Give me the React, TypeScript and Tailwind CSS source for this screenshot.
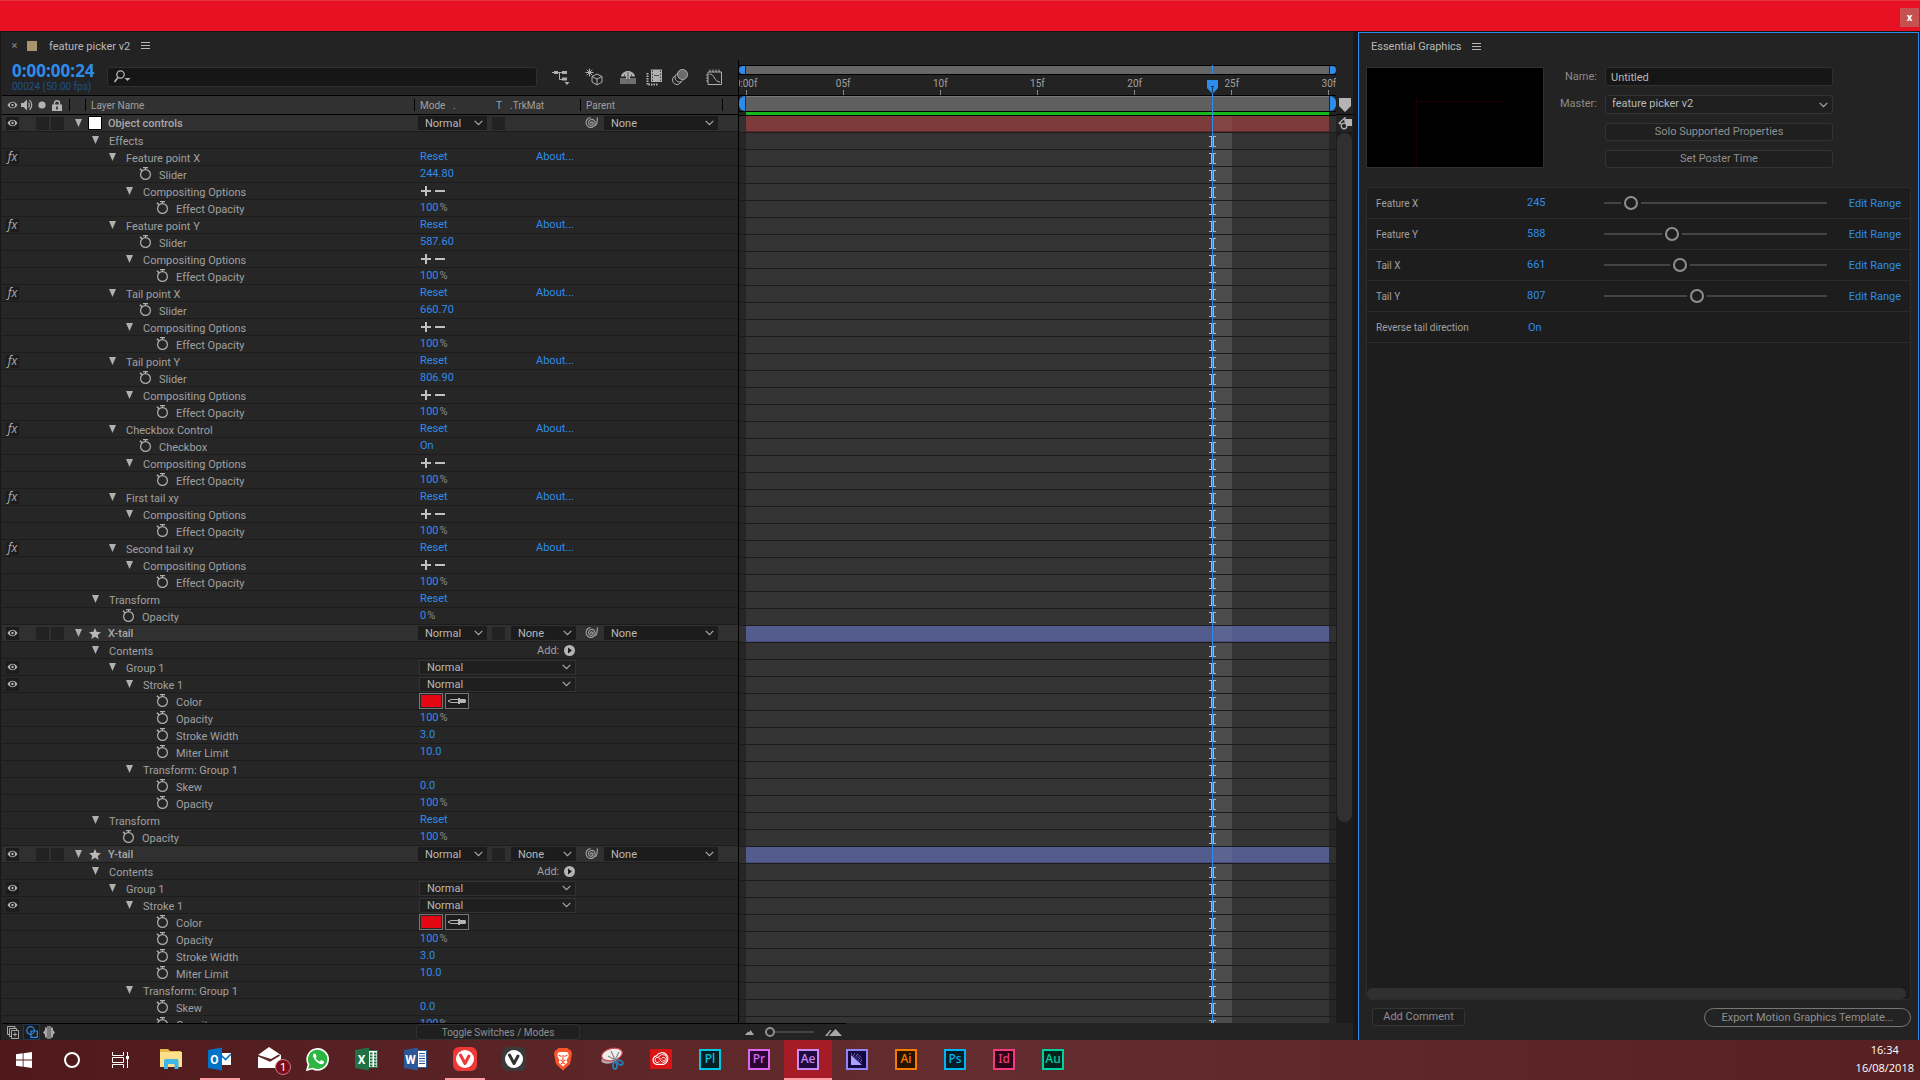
import React from "react";

type Row = {
  kind: "layer" | "group" | "prop";
  name: string;
  depth: number;
  value?: string;
  unit?: string;
  about?: boolean;
  fx?: boolean;
  eye?: boolean;
  icon?: "solid" | "star";
  trk?: boolean;
  extra?: "plusminus" | "add" | "blend" | "color";
};

const effect = (name: string, control?: [string, string]): Row[] => [
  { kind: "group", name, depth: 2, value: "Reset", about: true, fx: true },
  ...(control ? [{ kind: "prop", name: control[0], depth: 3, value: control[1] } as Row] : []),
  { kind: "group", name: "Compositing Options", depth: 3, extra: "plusminus" },
  { kind: "prop", name: "Effect Opacity", depth: 4, value: "100", unit: "%" },
];

const shape = (name: string): Row[] => [
  { kind: "layer", name, depth: 0, icon: "star", trk: true },
  { kind: "group", name: "Contents", depth: 1, extra: "add" },
  { kind: "group", name: "Group 1", depth: 2, eye: true, extra: "blend" },
  { kind: "group", name: "Stroke 1", depth: 3, eye: true, extra: "blend" },
  { kind: "prop", name: "Color", depth: 4, extra: "color" },
  { kind: "prop", name: "Opacity", depth: 4, value: "100", unit: "%" },
  { kind: "prop", name: "Stroke Width", depth: 4, value: "3.0" },
  { kind: "prop", name: "Miter Limit", depth: 4, value: "10.0" },
  { kind: "group", name: "Transform: Group 1", depth: 3 },
  { kind: "prop", name: "Skew", depth: 4, value: "0.0" },
  { kind: "prop", name: "Opacity", depth: 4, value: "100", unit: "%" },
  { kind: "group", name: "Transform", depth: 1, value: "Reset" },
  { kind: "prop", name: "Opacity", depth: 2, value: "100", unit: "%" },
];

const rows: Row[] = [
  { kind: "layer", name: "Object controls", depth: 0, icon: "solid" },
  { kind: "group", name: "Effects", depth: 1 },
  ...effect("Feature point X", ["Slider", "244.80"]),
  ...effect("Feature point Y", ["Slider", "587.60"]),
  ...effect("Tail point X", ["Slider", "660.70"]),
  ...effect("Tail point Y", ["Slider", "806.90"]),
  ...effect("Checkbox Control", ["Checkbox", "On"]),
  ...effect("First tail xy"),
  ...effect("Second tail xy"),
  { kind: "group", name: "Transform", depth: 1, value: "Reset" },
  { kind: "prop", name: "Opacity", depth: 2, value: "0", unit: "%" },
  ...shape("X-tail"),
  ...shape("Y-tail").slice(0, 11),
];

/* ---------- small icons ---------- */

const Eye = () => (
  <svg width="11" height="8" viewBox="0 0 11 8" aria-hidden="true">
    <path d="M0.5 4C2 1.6 3.600 .7 5.500 .7S9 1.600 10.500 4C9 6.400 7.400 7.300 5.500 7.300S2 6.400 .5 4Z" fill="#b4b4b4" />
    <circle cx="5.500" cy="4" r="2.500" fill="#1c1c1c" />
    <circle cx="5.500" cy="4" r="1.200" fill="#b4b4b4" />
  </svg>
);

const Twirl = () => (
  <svg width="7" height="8" viewBox="0 0 7 8" aria-hidden="true">
    <path d="M0 0H7L3.500 8Z" fill="#b0b0b0" />
  </svg>
);

const Stopwatch = () => (
  <svg width="13" height="14" viewBox="0 0 13 14" fill="none" stroke="#b0b0b0" aria-hidden="true">
    <circle cx="6.500" cy="7.500" r="4.900" strokeWidth="1.200" />
    <path d="M4 .6H9M6.500 .6V3" strokeWidth="1.200" />
    <path d="M1 1.700L3 3.700" strokeWidth="1.600" />
  </svg>
);

const Whip = () => (
  <svg width="13" height="12" viewBox="0 0 13 12" fill="none" stroke="#a0a0a0" strokeWidth="1.200" aria-hidden="true">
    <path d="M6.500 6.500C5.500 6.500 5.300 5.300 6.300 4.900C7.500 4.500 8.500 5.800 8 7C7.300 8.700 4.800 8.700 3.900 7C3 5.200 4 3 6 2.500C8.500 2 10.500 4 10.200 6.500C9.900 9.500 6.500 11.300 3.800 10C1 8.700 .3 5 1.900 2.700C2.800 1.400 4 .8 5.500 .6" />
    <path d="M12.300 .5C12.500 3 12.300 6.500 10.500 9" />
  </svg>
);

const Chevron = () => (
  <svg width="9" height="6" viewBox="0 0 9 6" fill="none" stroke="#a8a8a8" strokeWidth="1.200" aria-hidden="true">
    <path d="M.7 .8L4.500 4.600L8.300 .8" />
  </svg>
);

const Star = () => (
  <svg width="12" height="11" viewBox="0 0 12 11" aria-hidden="true">
    <path d="M6 0L7.600 3.800L12 4.200L8.700 6.900L9.700 11L6 8.700L2.300 11L3.300 6.900L0 4.200L4.400 3.800Z" fill="#b8b8b8" />
  </svg>
);

const Burger = () => (
  <svg width="9" height="8" viewBox="0 0 9 8" stroke="#b8b8b8" strokeWidth="1" aria-hidden="true">
    <path d="M0 .5H9M0 3.500H9M0 6.500H9" />
  </svg>
);

function Select({ label, value, box }: { label: string; value: string; box: string }) {
  return (
    <span className={"grid items-center " + box}>
      <select
        aria-label={label}
        className="col-start-1 row-start-1 h-full w-full appearance-none bg-transparent pl-[7px] text-[11px] leading-[13px] text-[#b8b8b8] outline-none"
      >
        <option>{value}</option>
      </select>
      <span className="pointer-events-none col-start-1 row-start-1 mr-1 justify-self-end">
        <Chevron />
      </span>
    </span>
  );
}

/* ---------- layer outline ---------- */

const indent = ["w-[7px]", "w-6", "w-[41px]", "w-[58px]", "w-[75px]"];

function OutlineRow({ row }: { row: Row }) {
  const layer = row.kind === "layer";
  return (
    <div
      className={
        "flex h-[17px] shrink-0 items-center border-b border-[#1c1c1c] text-[11px] leading-4 " +
        (layer ? "bg-[#303030]" : "bg-[#262626]")
      }
    >
      <div className="flex w-[66px] shrink-0 items-center pl-1">
        <span
          className={
            "flex h-[13px] w-[13px] items-center justify-center " +
            (layer || row.eye || row.fx ? "bg-[#1c1c1c]" : "")
          }
        >
          {(layer || row.eye) && <Eye />}
          {row.fx && (
            <i className="pb-[2px] font-['Open_Sans',sans-serif] text-[12px] leading-[11px] text-[#b0b0b0]">fx</i>
          )}
        </span>
        {layer && <span className="ml-[17px] h-[13px] w-[13px] bg-[#222]" />}
        {layer && <span className="ml-[2px] h-[13px] w-[13px] bg-[#222]" />}
      </div>
      <div className="flex min-w-0 flex-1 items-center">
        <span className={"shrink-0 " + indent[row.depth]} />
        {layer && (
          <>
            <Twirl />
            <span className="ml-[6px] flex w-[14px] justify-center">
              {row.icon === "star" ? <Star /> : <span className="h-[14px] w-[14px] border border-black bg-white" />}
            </span>
            <span className="ml-[6px] pt-px font-medium text-[#a8a8a8]">{row.name}</span>
          </>
        )}
        {row.kind === "group" && (
          <>
            <span className="mr-[10px]">
              <Twirl />
            </span>
            <span className="pt-[3px] text-[#a0a0a0]">{row.name}</span>
          </>
        )}
        {row.kind === "prop" && (
          <>
            <span className="ml-[13px] mr-[7px]">
              <Stopwatch />
            </span>
            <span className="pt-[3px] text-[#a0a0a0]">{row.name}</span>
          </>
        )}
      </div>
      <div className="flex w-[320px] shrink-0 items-center">
        {layer && (
          <>
            <Select label={row.name + " mode"} value="Normal" box="h-[14px] w-[69px] bg-[#1c1c1c]" />
            <span className="ml-[5px] h-[13px] w-[13px] bg-[#222]" />
            <span className="ml-[6px] w-[65px]">
              {row.trk && <Select label={row.name + " track matte"} value="None" box="h-[14px] w-[65px] bg-[#1c1c1c]" />}
            </span>
            <span className="ml-[9px] mr-[6px]">
              <Whip />
            </span>
            <Select label={row.name + " parent"} value="None" box="h-[14px] w-[114px] bg-[#1c1c1c]" />
          </>
        )}
        {row.value && (
          <span className="w-[116px] pl-[2px]">
            <button className="text-[#2d8ceb]">{row.value}</button>
            {row.unit && <span className="ml-px text-[#8a8a8a]">{row.unit}</span>}
          </span>
        )}
        {row.about && <button className="ml-[2px] text-[#2d8ceb]">About...</button>}
        {row.extra === "plusminus" && (
          <span className="ml-[3px] flex gap-1">
            <button aria-label="Add compositing mask">
              <svg width="10" height="10" stroke="#c0c0c0" strokeWidth="2" aria-hidden="true">
                <path d="M0 5H10M5 0V10" />
              </svg>
            </button>
            <button aria-label="Remove compositing mask">
              <svg width="10" height="10" stroke="#c0c0c0" strokeWidth="2" aria-hidden="true">
                <path d="M0 5H10" />
              </svg>
            </button>
          </span>
        )}
        {row.extra === "add" && (
          <button className="ml-[119px] flex items-center gap-[5px] text-[#a0a0a0]">
            <span className="pt-[2px]">Add:</span>
            <svg width="11" height="11" viewBox="0 0 11 11" aria-hidden="true">
              <circle cx="5.500" cy="5.500" r="5.500" fill="#b4b4b4" />
              <path d="M4 2.500L8 5.500L4 8.500Z" fill="#1c1c1c" />
            </svg>
          </button>
        )}
        {row.extra === "blend" && (
          <Select
            label={row.name + " blend mode"}
            value="Normal"
            box="ml-px h-[15px] w-[157px] border border-[#323232] bg-[#1f1f1f]"
          />
        )}
        {row.extra === "color" && (
          <span className="ml-px flex gap-[2px]">
            <button aria-label="Stroke color" className="h-4 w-6 border border-[#777] bg-[#e30613] outline outline-1 -outline-offset-2 outline-[#262626]" />
            <button aria-label="Pick color" className="flex h-4 w-6 items-center justify-center border border-[#777] bg-[#1c1c1c]">
              <svg width="20" height="8" viewBox="0 0 20 8" aria-hidden="true">
                <path d="M12 2.500H4L1 4L4 5.500H12" fill="none" stroke="#b4b4b4" strokeWidth="1" />
                <path d="M11 1H13V2H18L19 3V5L18 6H13V7H11Z" fill="#b4b4b4" />
              </svg>
            </button>
          </span>
        )}
      </div>
    </div>
  );
}

/* ---------- timeline ---------- */

const IBeam = () => (
  <svg width="7" height="11" viewBox="0 0 7 11" className="absolute -left-[3px] top-[3px]" stroke="#b4b4b4" aria-hidden="true">
    <path d="M0 .5H7M0 10.500H7" />
    <path d="M3.500 0V11" strokeWidth="3" />
  </svg>
);

function TrackRow({ row }: { row: Row }) {
  const layer = row.kind === "layer";
  const red = row.icon === "solid";
  return (
    <div className={"flex h-[17px] shrink-0 border-b border-[#1c1c1c] px-[7px] " + (layer ? "bg-[#303030]" : "bg-[#262626]")}>
      <div
        className={
          "flex flex-1 " +
          (layer
            ? red
              ? "border-b border-[#5e2a2a] bg-[#7c3a3a]"
              : "border-b border-[#464d7c] bg-[#535c8c]"
            : "bg-[#343434]")
        }
      >
        <span className="w-[80%]" />
        <span className={"relative w-[3.33%] " + (layer ? "bg-white/5" : "bg-white/12")}>{!layer && <IBeam />}</span>
      </div>
    </div>
  );
}

function Timeline() {
  const labels = ["0:00f", "05f", "10f", "15f", "20f", "25f", "30f"];
  return (
    <div className="relative flex min-w-0 flex-1 flex-col overflow-hidden border-l border-black">
      <div className="mt-[5px] flex h-[10px] items-stretch border-y border-black bg-[#232323]">
        <span className="w-[6px] rounded-l-full bg-[#2d8ceb]" />
        <span className="mx-px flex-1 bg-[#666]" />
        <span className="w-[6px] rounded-r-full bg-[#2d8ceb]" />
      </div>
      <div className="flex h-5 justify-between px-[7px] pt-1 text-[10px] leading-[10px] text-[#a0a0a0]">
        {labels.map((l) => (
          <span key={l} className="flex w-0 flex-col items-center justify-between whitespace-nowrap">
            {l}
            <span className="h-[5px] w-px bg-[#8a8a8a]" />
          </span>
        ))}
      </div>
      <div className="flex h-[17px] items-stretch border-y border-black">
        <span className="w-[6px] rounded-l-md bg-[#2d8ceb]" />
        <span className="mx-px flex-1 border-t border-[#777] bg-[#5f5f5f]" />
        <span className="w-[6px] rounded-r-md bg-[#2d8ceb]" />
      </div>
      <div className="flex h-[3px] px-[7px]">
        <span className="flex-1 bg-[#16b81e]" />
      </div>
      <div className="flex min-h-0 flex-1 flex-col overflow-hidden border-t border-black">
        {rows.map((r, i) => (
          <TrackRow key={i} row={r} />
        ))}
      </div>
      <div className="pointer-events-none absolute inset-x-[7px] bottom-0 top-[5px]">
        <div className="relative h-full">
          <span className="absolute left-[80%] top-0 h-[9px] w-px bg-[#2d8ceb]" />
          <span className="absolute bottom-0 left-[80%] top-7 w-px bg-[#2d8ceb]" />
          <span className="absolute left-[80%] top-[15px] -ml-[5px]">
            <svg width="11" height="14" viewBox="0 0 11 14" aria-hidden="true">
              <path d="M0 0H11V8L6.500 13H4.500L0 8Z" fill="#2d8ceb" />
              <path d="M4 6.500H7M5.500 6.500V13" stroke="#12385f" />
            </svg>
          </span>
        </div>
      </div>
    </div>
  );
}

const ToolIcon = ({ label, children }: { label: string; children: React.ReactNode }) => (
  <button aria-label={label} className="flex h-5 w-5 items-center justify-center">
    <svg width="18" height="18" viewBox="0 0 18 18" fill="none" stroke="#b0b0b0" aria-hidden="true">
      {children}
    </svg>
  </button>
);

function Tools() {
  return (
    <div className="flex items-center pb-[2px] pl-[14px]">
      <ToolIcon label="Mini flowchart">
        <path d="M0 4.500H10M7.500 4.500V11.500H10" />
        <path d="M2 3H6V6H2ZM10 3H15V6H10ZM10 9.500H15V12.500H10ZM12.500 14H17.500L15 17Z" fill="#b0b0b0" stroke="none" />
      </ToolIcon>
      <span className="w-[13px]" />
      <ToolIcon label="Draft 3D">
        <path d="M12 6L17 8.500V14L12 17L7 14V8.500ZM7 8.500L12 11L17 8.500M12 11V17" />
        <path d="M4.500 .5V8.500M.5 4.500H8.500M1.700 1.700L7.300 7.300M7.300 1.700L1.700 7.300" />
      </ToolIcon>
      <span className="w-[14px]" />
      <ToolIcon label="Hide shy layers">
        <path d="M1 10H17V16H1Z" fill="#6e6e6e" stroke="none" />
        <path d="M2 8.500C2 5.500 5.500 3 9 3S16 5.500 16 8.500H11V11H7V8.500Z" fill="#b0b0b0" stroke="none" />
        <path d="M9 4V13M5.500 9V6.500M12.500 9V6.500" stroke="#555" />
      </ToolIcon>
      <span className="w-[6px]" />
      <ToolIcon label="Frame blending">
        <path d="M2.500 5V16.500H13" strokeDasharray="1.500 1" strokeWidth="2" />
        <path d="M6 1.500H17V14H6Z" fill="#b0b0b0" stroke="none" />
        <path d="M7.500 2.500V13M15.500 2.500V13" stroke="#3a3a3a" strokeDasharray="1.500 1.500" />
        <path d="M9 7.500H14" stroke="#555" />
      </ToolIcon>
      <span className="w-[6px]" />
      <ToolIcon label="Motion blur">
        <circle cx="6" cy="12" r="4.500" fill="#232323" />
        <circle cx="8.500" cy="9.500" r="4.500" fill="#232323" />
        <circle cx="11.500" cy="6.500" r="5" fill="#6a6a6a" />
      </ToolIcon>
      <span className="w-[14px]" />
      <ToolIcon label="Graph editor">
        <path d="M3 4H16.500V16.500H3ZM4.500 6C10 6 9 14 15 14" />
        <path d="M5 1.500V4M8 1.500V4M11 1.500V4M14 1.500V4M1 7H3M1 10H3M1 13H3" />
      </ToolIcon>
    </div>
  );
}

function ColumnHeader() {
  return (
    <div className="flex h-5 shrink-0 items-center border-y border-black bg-[#313131] text-[10px] leading-4 text-[#a0a0a0]">
      <div className="flex w-[67px] items-center gap-[3px] pl-[5px]">
        <Eye />
        <svg width="12" height="12" viewBox="0 0 12 12" aria-hidden="true">
          <path d="M0 4H2.500L6 .5V11.500L2.500 8H0Z" fill="#b4b4b4" />
          <path d="M7.500 3.500Q9 6 7.500 8.500M8.500 1.200Q13 6 8.500 10.800" fill="none" stroke="#b4b4b4" strokeWidth="1.200" />
        </svg>
        <svg width="12" height="8" viewBox="0 0 12 8" aria-hidden="true">
          <circle cx="6" cy="4" r="3.600" fill="#b4b4b4" />
        </svg>
        <svg width="10" height="11" viewBox="0 0 10 11" className="ml-px" aria-hidden="true">
          <path d="M0 4.500H10V11H0Z" fill="#b4b4b4" />
          <path d="M2.500 5V3C2.500 0 7.500 0 7.500 3V5" fill="none" stroke="#b4b4b4" strokeWidth="1.400" />
          <path d="M5 6.500V9.500" stroke="#222" strokeWidth="1.500" />
        </svg>
      </div>
      <span className="h-3 w-px bg-black" />
      <span className="ml-[15px] h-3 w-px bg-black" />
      <span className="flex-1 pl-[5px] pt-[2px]">Layer Name</span>
      <div className="flex h-full w-[324px] items-center">
        <span className="h-3 w-px shrink-0 bg-black" />
        <span className="w-[38px] shrink-0 pl-[5px] pt-[2px]">Mode</span>
        <span className="w-[43px] shrink-0 pt-[2px]">.</span>
        <span className="w-[14px] shrink-0 pt-[2px]">T</span>
        <span className="w-[70px] shrink-0 pt-[2px]">.TrkMat</span>
        <span className="h-3 w-px shrink-0 bg-black" />
        <span className="w-[141px] shrink-0 pl-[5px] pt-[2px]">Parent</span>
        <span className="h-3 w-px shrink-0 bg-black" />
      </div>
    </div>
  );
}

function CompPanel() {
  return (
    <section className="ml-px mr-[5px] flex min-w-0 flex-1 flex-col bg-[#232323]" aria-label="Timeline">
      <header className="flex h-7 shrink-0 items-center pl-[10px] text-[11px] text-[#b8b8b8]">
        <button aria-label="Close tab" className="w-[7px] text-[11px] text-[#8a8a8a]">
          ×
        </button>
        <span className="ml-[9px] h-[10px] w-[10px] bg-[#a8946c]" />
        <span className="ml-3 mr-[11px] pt-[2px]">feature picker v2</span>
        <button aria-label="Panel menu">
          <Burger />
        </button>
      </header>
      <div className="flex min-h-0 flex-1">
        <div className="flex w-[737px] shrink-0 flex-col">
          <div className="flex h-[35px] shrink-0 items-center pl-[11px]">
            <div className="w-[95px] pb-px">
              <div className="font-['Open_Sans',sans-serif] text-[17px] font-bold leading-[18px] text-[#2d8ceb]">0:00:00:24</div>
              <div className="text-[10px] leading-[13px] text-[#1e5288]">00024 (50.00 fps)</div>
            </div>
            <label className="mb-[2px] flex h-5 w-[430px] items-center rounded-[3px] border border-[#303030] bg-[#161616] pl-[6px]">
              <svg width="17" height="13" viewBox="0 0 17 13" fill="none" stroke="#b4b4b4" strokeWidth="1.300" aria-hidden="true">
                <circle cx="6.500" cy="4.500" r="3.700" />
                <path d="M4 7.500L.5 12" strokeWidth="1.600" />
                <path d="M10.500 8H16.500L13.500 11Z" fill="#b4b4b4" stroke="none" />
              </svg>
              <input aria-label="Search layers" className="min-w-0 flex-1 bg-transparent outline-none" />
            </label>
            <Tools />
          </div>
          <div className="ml-px flex min-h-0 flex-1 flex-col">
            <ColumnHeader />
            <div className="flex min-h-0 flex-1 flex-col overflow-hidden">
              {rows.map((r, i) => (
                <OutlineRow key={i} row={r} />
              ))}
            </div>
          </div>
        </div>
        <Timeline />
        <div className="flex w-[17px] shrink-0 flex-col items-center">
          <div className="mt-[36px] flex h-[18px] items-center">
            <svg width="12" height="14" viewBox="0 0 12 14" aria-hidden="true">
              <path d="M0 0H12V8L6 14L0 8Z" fill="#b4b4b4" />
            </svg>
          </div>
          <div className="flex h-[18px] w-full items-center justify-center border-t border-black">
            <svg width="14" height="13" viewBox="0 0 14 13" aria-hidden="true">
              <path d="M7 2H14V9H7Z" fill="#b4b4b4" />
              <path d="M.7 6.500L7 .8V5M.7 6.500H3" fill="none" stroke="#b4b4b4" strokeWidth="1.300" />
              <circle cx="6" cy="9" r="2.800" fill="#232323" stroke="#b4b4b4" strokeWidth="1.300" />
            </svg>
          </div>
          <div className="w-full flex-1 bg-[#1c1c1c] px-px pt-px">
            <div className="h-[77.4%] w-full rounded-full bg-[#303030]" />
          </div>
        </div>
      </div>
      <footer className="flex h-[17px] shrink-0 items-center">
        <div className="ml-px flex h-full w-[736px] items-center border-t border-black">
          <button aria-label="Layer switches" className="ml-[5px]">
            <svg width="12" height="13" viewBox="0 0 12 13" fill="none" stroke="#a8a8a8" aria-hidden="true">
              <path d="M3 8.500H.5V.5H8V3M5 10.500H2.500V2.500H9.500V5" />
              <path d="M4.500 4.500H11.500V12.500H4.500ZM6 8.500H10M8 6.500V10.500" />
            </svg>
          </button>
          <button aria-label="Transfer controls" className="ml-1 flex h-4 w-[17px] items-center justify-center border border-[#163a60] bg-[#1c1c1c]">
            <svg width="12" height="12" viewBox="0 0 12 12" fill="none" stroke="#2d8ceb" strokeWidth="1.200" aria-hidden="true">
              <circle cx="4.500" cy="4.500" r="3.800" />
              <path d="M5 5H11.300V11.300H5Z" />
            </svg>
          </button>
          <button aria-label="In and out columns" className="ml-[3px]">
            <svg width="12" height="13" viewBox="0 0 12 13" aria-hidden="true">
              <path d="M0 6.500L2 4V1.500H4V11.500H2V9ZM12 6.500L10 4V1.500H8V11.500H10V9Z" fill="#a8a8a8" />
              <path d="M4 0H8V13H4Z" fill="#7c7c7c" />
            </svg>
          </button>
          <button className="ml-auto mr-[158px] h-4 w-[164px] rounded-[3px] border border-[#303030] bg-[#1f1f1f] pt-px text-[10px] leading-3 text-[#8f8f8f]">
            Toggle Switches / Modes
          </button>
        </div>
        <div className="flex h-full items-center border-t border-black pl-[7px] pr-1">
          <svg width="9" height="5" viewBox="0 0 9 5" aria-hidden="true">
            <path d="M0 5L3 1.500L4 2.500L5.500 0L9 5Z" fill="#a8a8a8" />
          </svg>
          <input
            type="range"
            aria-label="Timeline zoom"
            defaultValue={0}
            className="mx-[11px] h-[11px] w-[49px] appearance-none bg-transparent [&::-webkit-slider-runnable-track]:h-[2px] [&::-webkit-slider-runnable-track]:bg-[#444] [&::-webkit-slider-thumb]:-mt-1 [&::-webkit-slider-thumb]:h-[10px] [&::-webkit-slider-thumb]:w-[10px] [&::-webkit-slider-thumb]:appearance-none [&::-webkit-slider-thumb]:rounded-full [&::-webkit-slider-thumb]:border-2 [&::-webkit-slider-thumb]:border-[#8f8f8f] [&::-webkit-slider-thumb]:bg-[#232323]"
          />
          <svg width="17" height="7" viewBox="0 0 17 7" aria-hidden="true">
            <path d="M0 7L5 1L6.500 1L2.500 7ZM4 7L10.500 0L17 7Z" fill="#a8a8a8" />
          </svg>
        </div>
      </footer>
    </section>
  );
}

/* ---------- essential graphics ---------- */

const sliders: [string, number][] = [
  ["Feature X", 245],
  ["Feature Y", 588],
  ["Tail X", 661],
  ["Tail Y", 807],
];

function EssentialPanel() {
  const btn = "h-[18px] rounded-[3px] border border-[#343434] bg-[#1f1f1f] text-[11px] leading-4 text-[#8f8f8f]";
  return (
    <section className="mr-px flex w-[561px] shrink-0 flex-col border-x border-t border-[#2d8ceb] bg-[#232323] pl-[7px] pr-[7px] text-[11px]" aria-label="Essential Graphics">
      <header className="flex h-7 shrink-0 items-center pl-[5px] text-[#b8b8b8]">
        <h2 className="mr-[10px]">Essential Graphics</h2>
        <button aria-label="Panel menu">
          <Burger />
        </button>
      </header>
      <div className="mt-[6px] flex h-[120px] shrink-0">
        <div className="h-[101px] w-[178px] border border-[#303030] bg-black">
          <svg viewBox="0 0 176 99" className="h-full w-full" stroke="#1a0000" aria-label="Poster frame">
            <path d="M49.500 30V99M49 33.500H137" />
          </svg>
        </div>
        <div className="ml-[15px] grid h-[101px] grid-cols-[38px_228px] content-between gap-x-2 text-[#8a8a8a]">
          <label htmlFor="eg-name" className="self-center pt-[2px] text-right">
            Name:
          </label>
          <input
            id="eg-name"
            defaultValue="Untitled"
            className="h-[19px] rounded-[3px] border border-[#303030] bg-[#161616] px-[5px] pt-px text-[#b8b8b8] outline-none"
          />
          <label htmlFor="eg-master" className="self-center text-right">
            Master:
          </label>
          <span className="grid items-center rounded-[3px] border border-[#343434] bg-[#1f1f1f]">
            <select id="eg-master" className="col-start-1 row-start-1 h-[17px] appearance-none bg-transparent pl-[6px] text-[#b8b8b8] outline-none">
              <option>feature picker v2</option>
            </select>
            <span className="pointer-events-none col-start-1 row-start-1 mr-1 justify-self-end">
              <Chevron />
            </span>
          </span>
          <button className={"col-start-2 " + btn}>Solo Supported Properties</button>
          <button className={"col-start-2 " + btn}>Set Poster Time</button>
        </div>
      </div>
      <div className="flex min-h-0 flex-1 flex-col rounded-[3px] border border-[#2c2c2c] bg-[#1d1d1d]">
        {sliders.map(([name, v]) => (
          <div key={name} className="flex h-[31px] items-center border-b border-[#2c2c2c] px-[9px]">
            <label htmlFor={name} className="w-[151px] pt-px text-[10px] text-[#a0a0a0]">
              {name}
            </label>
            <button className="w-[77px] pt-px text-left text-[#2d8ceb]">{v}</button>
            <input
              id={name}
              type="range"
              min={70}
              max={1855}
              defaultValue={v}
              className="h-[14px] w-[223px] appearance-none bg-transparent [&::-webkit-slider-runnable-track]:h-[2px] [&::-webkit-slider-runnable-track]:bg-[#444] [&::-webkit-slider-thumb]:-mt-[6px] [&::-webkit-slider-thumb]:h-[14px] [&::-webkit-slider-thumb]:w-[14px] [&::-webkit-slider-thumb]:appearance-none [&::-webkit-slider-thumb]:rounded-full [&::-webkit-slider-thumb]:border-2 [&::-webkit-slider-thumb]:border-[#8f8f8f] [&::-webkit-slider-thumb]:bg-[#1d1d1d] [&::-webkit-slider-thumb]:shadow-[0_0_0_3px_#1d1d1d]"
            />
            <button className="ml-auto pt-[3px] text-[#2d8ceb]">Edit Range</button>
          </div>
        ))}
        <div className="flex h-[31px] items-center border-b border-[#2c2c2c] px-[9px]">
          <span className="w-[152px] pt-px text-[10px] text-[#a0a0a0]">Reverse tail direction</span>
          <button className="pt-[3px] text-[#2d8ceb]">On</button>
        </div>
        <div className="mr-1 mt-auto h-[11px] rounded-full bg-[#303030]" />
      </div>
      <footer className="flex h-10 shrink-0 items-start justify-between pl-[6px] pt-2">
        <button className="h-[18px] w-[93px] rounded-[3px] border border-[#343434] bg-[#1f1f1f] leading-4 text-[#8f8f8f]">
          Add Comment
        </button>
        <button className="h-[19px] w-[207px] rounded-full border border-[#777] leading-[17px] text-[#8f8f8f]">
          Export Motion Graphics Template...
        </button>
      </footer>
    </section>
  );
}

/* ---------- taskbar ---------- */

const Adobe = ({ text, tone }: { text: string; tone: string }) => (
  <span className={"flex h-[21px] w-[22px] items-center justify-center border-2 font-['Noto_Sans',sans-serif] text-[12px] font-medium leading-none " + tone}>{text}</span>
);

const Svg = ({ w = 24, h = 24, children }: { w?: number; h?: number; children: React.ReactNode }) => (
  <svg width={w} height={h} viewBox={`0 0 ${w} ${h}`} fill="none" aria-hidden="true">
    {children}
  </svg>
);

const Office = ({ color, letter, children }: { color: string; letter: string; children: React.ReactNode }) => (
  <Svg>
    {children}
    <path d="M0 3L14 .5V23.500L0 21Z" fill={color} />
    <text x="6.500" y="16.500" fontSize="12" fontWeight="700" fill="#fff" textAnchor="middle" fontFamily="Roboto">
      {letter}
    </text>
  </Svg>
);

const apps: { label: string; icon: React.ReactNode; open?: boolean; active?: boolean }[] = [
  {
    label: "File Explorer",
    icon: (
      <Svg>
        <path d="M1 2H9L11 4H22V19H1Z" fill="#e8b84a" />
        <path d="M1 5H23V20H1Z" fill="#fde08d" />
        <path d="M5 22V13.500Q5 12 6.500 12H18Q19.500 12 19.500 13.500V22H15.500V17H9V22Z" fill="#3fb6e8" />
      </Svg>
    ),
  },
  {
    label: "Outlook",
    open: true,
    icon: (
      <Office color="#0173c7" letter="O">
        <path d="M12 6H23V18H12Z" fill="#fff" />
        <path d="M13 8L17.500 12.500L23 7" stroke="#0173c7" strokeWidth="1.600" />
      </Office>
    ),
  },
  {
    label: "Mail",
    icon: (
      <span className="relative ml-[2px] flex">
        <Svg w={26} h={24}>
          <path d="M1 8L12 0L24 8V21H1Z" fill="#fff" />
          <path d="M3 8.500L14 12L21 8L13 13.500Z" fill="#5a1f22" />
          <path d="M1 8.500L13 14L22.500 8" stroke="#5a1f22" strokeWidth="1.500" />
        </Svg>
        <span className="absolute -bottom-1 -right-2 flex h-4 w-4 items-center justify-center rounded-full border border-[#c0808a] bg-[#7c0d16] text-[11px] leading-none text-white">
          1
        </span>
      </span>
    ),
  },
  {
    label: "WhatsApp",
    icon: (
      <Svg>
        <path d="M1 23L2.500 17.500A10.500 10.500 0 1 1 6.500 21.500Z" fill="#2cb742" stroke="#fff" strokeWidth="1.600" />
        <path d="M8 6.500C6.500 7.500 6.700 10 9 13C11.500 16.200 14.500 17.800 16.500 17C18 16.300 18.200 15 18 14.500L15.200 13L13.800 14.600C12 14 10.400 12.400 9.700 10.900L10.600 9.500L9.500 6.700Z" fill="#fff" />
      </Svg>
    ),
  },
  {
    label: "Excel",
    icon: (
      <Office color="#207245" letter="X">
        <path d="M12 3.500H22.500V20.500H12Z" fill="#fff" stroke="#207245" />
        <path d="M15 6.500H17.500M19 6.500H21.500M15 9.500H17.500M19 9.500H21.500M15 12.500H17.500M19 12.500H21.500M15 15.500H17.500M19 15.500H21.500M15 18.500H17.500M19 18.500H21.500" stroke="#207245" strokeWidth="2" />
      </Office>
    ),
  },
  {
    label: "Word",
    icon: (
      <Office color="#2b5797" letter="W">
        <path d="M12 3.500H22.500V20.500H12Z" fill="#fff" stroke="#2b5797" />
        <path d="M15 6.500H21M15 9H21M15 11.500H21M15 14H21M15 16.500H21" stroke="#2b5797" />
      </Office>
    ),
  },
  {
    label: "Vivaldi",
    open: true,
    icon: (
      <Svg>
        <rect width="24" height="24" rx="6" fill="#ef3939" />
        <circle cx="12" cy="12" r="9" fill="#fff" />
        <path d="M7.500 8L12 16.500L16 9" stroke="#ef3939" strokeWidth="3" strokeLinecap="round" strokeLinejoin="round" />
      </Svg>
    ),
  },
  {
    label: "Vivaldi Snapshot",
    icon: (
      <Svg>
        <rect width="24" height="24" rx="6" fill="#3a3a3a" />
        <circle cx="12" cy="12" r="9" fill="#fff" />
        <path d="M7.500 8L12 16.500L16 9" stroke="#333" strokeWidth="3" strokeLinecap="round" strokeLinejoin="round" />
      </Svg>
    ),
  },
  {
    label: "Brave",
    icon: (
      <Svg>
        <path d="M7.500 1H16.500L18.500 3L20 3.500L21 7L19 17L12 23.500L5 17L3 7L4 3.500L5.500 3Z" fill="#fb542b" />
        <path d="M7 5.500L9.500 5H14.500L17 5.500L17.800 9L15.500 13L16.500 15.500L12 19.500L7.500 15.500L8.500 13L6.200 9Z" fill="#fff" />
        <path d="M7.500 8L10.500 9.500M16.500 8L13.500 9.500M12 8V13M9.500 13L12 14.500L14.500 13M10 17L12 15.500L14 17" stroke="#fb542b" strokeWidth="1.200" />
      </Svg>
    ),
  },
  {
    label: "Snipping Tool",
    icon: (
      <Svg>
        <ellipse cx="10.500" cy="11" rx="9.500" ry="5" transform="rotate(-20 10.500 11)" fill="#b9a9aa" />
        <ellipse cx="12" cy="7.500" rx="10.500" ry="6" transform="rotate(-14 12 7.500)" fill="#f1eded" stroke="#c94750" strokeWidth="1.200" />
        <path d="M11 4L15.500 14M19 5L14.500 14M8 9L15 13" stroke="#888" strokeWidth="1.200" />
        <ellipse cx="15" cy="18.500" rx="2" ry="3.500" stroke="#2a7fb8" strokeWidth="1.800" />
        <ellipse cx="20" cy="15.500" rx="3" ry="2" transform="rotate(30 20 15.500)" stroke="#2a7fb8" strokeWidth="1.800" />
      </Svg>
    ),
  },
  {
    label: "Creative Cloud",
    icon: (
      <Svg w={22} h={20}>
        <rect width="22" height="20" rx="1" fill="#da1414" />
        <path d="M7 15.300A4.300 4.300 0 0 1 6.600 6.800A6 6 0 1 1 14 15.300Z" stroke="#fff" strokeWidth="1.200" />
        <path d="M11 10.500C9.500 8.500 8 8.300 6.800 8.500A2.600 2.600 0 0 0 7 13.500C8.500 13.500 9 12.800 9.500 12.500M8.500 8C10 5.500 13 5 15.200 6.500C18 8.500 17 13.300 13.500 13.300C11.500 13.300 11 12 9.500 10.300M11.500 9.500C12.500 7.800 15.500 8.300 15.500 10.500C15.300 12 13.500 12 12.500 11" stroke="#fff" strokeWidth="1" />
      </Svg>
    ),
  },
  { label: "Prelude", icon: <Adobe text="Pl" tone="border-[#00c8e0] bg-[#0b1e24] text-[#00c8e0]" /> },
  { label: "Premiere Pro", icon: <Adobe text="Pr" tone="border-[#dd66ee] bg-[#2a0634] text-[#dd66ee]" /> },
  { label: "After Effects", active: true, icon: <Adobe text="Ae" tone="border-[#c78cf5] bg-[#1f0a40] text-[#c78cf5]" /> },
  {
    label: "Media Encoder",
    icon: (
      <span className="h-[21px] w-[22px] border-2 border-[#8f86f5] bg-[#12083f]">
        <Svg w={18} h={17}>
          <path d="M3 14V4L14 14Z" fill="#a9a0ff" />
          <path d="M3 2.500L14 12M6 2.500L14 9.500M9 3L14 7" stroke="#a9a0ff" strokeDasharray="1.500 1.500" />
        </Svg>
      </span>
    ),
  },
  { label: "Illustrator", icon: <Adobe text="Ai" tone="border-[#f57c00] bg-[#261300] text-[#f57c00]" /> },
  { label: "Photoshop", icon: <Adobe text="Ps" tone="border-[#00b4f0] bg-[#021c28] text-[#00b4f0]" /> },
  { label: "InDesign", icon: <Adobe text="Id" tone="border-[#f23a80] bg-[#2a0414] text-[#f23a80]" /> },
  { label: "Audition", icon: <Adobe text="Au" tone="border-[#00d0a0] bg-[#04231c] text-[#00d0a0]" /> },
];

function Taskbar() {
  return (
    <nav className="flex h-10 shrink-0 bg-linear-to-r from-[#4f181a] via-[#642d30] via-50% to-[#562022]" aria-label="Taskbar">
      <button aria-label="Start" className="flex w-12 items-center justify-center">
        <Svg w={16} h={16}>
          <path d="M0 2.300L6.700 1.300V7.500H0ZM7.500 1.200L16 0V7.500H7.500ZM0 8.400H6.700V14.700L0 13.700ZM7.500 8.400H16V16L7.500 14.800Z" fill="#fff" />
        </Svg>
      </button>
      <button aria-label="Cortana" className="flex w-12 items-center justify-center">
        <span className="h-4 w-4 rounded-full border-2 border-white" />
      </button>
      <button aria-label="Task view" className="flex w-12 items-center justify-center">
        <Svg w={17} h={16}>
          <path d="M.5 0V3.500H11.500V0M.5 16V12.500H11.500V16M.5 5.500H11.500V10.500H.5ZM15.500 0V16" stroke="#fff" />
          <path d="M14 4H17V7H14Z" fill="#fff" />
        </Svg>
      </button>
      <div className="ml-[3px] flex gap-px">
        {apps.map((a) => (
          <button
            key={a.label}
            aria-label={a.label}
            className={"flex w-12 flex-col items-center " + (a.active ? "bg-[#a51c26]" : "")}
          >
            <span className="flex h-[38px] items-center">{a.icon}</span>
            {a.open && <span className="h-[2px] w-10 bg-[#ff9da3]" />}
            {a.active && <span className="h-[2px] w-12 bg-[#ff9da3]" />}
          </button>
        ))}
      </div>
      <time className="ml-auto mr-[6px] flex flex-col items-center font-['Open_Sans',sans-serif] text-[11px] leading-[18px] text-white">
        <span className="mt-px">16:34</span>
        <span>16/08/2018</span>
      </time>
    </nav>
  );
}

export default function App() {
  return (
    <div className="flex h-screen flex-col overflow-hidden bg-[#181818] font-[Roboto,sans-serif]">
      <div className="flex h-8 shrink-0 items-start justify-end border-b border-t border-b-[#181818] border-t-[#e93040] bg-[#e81123]">
        <button aria-label="Close" className="mr-px mt-[7px] flex h-[19px] w-[19px] items-center justify-center bg-[#c75050] text-[11px] font-bold leading-none text-white">
          x
        </button>
      </div>
      <div className="flex min-h-0 flex-1">
        <CompPanel />
        <EssentialPanel />
      </div>
      <Taskbar />
    </div>
  );
}
